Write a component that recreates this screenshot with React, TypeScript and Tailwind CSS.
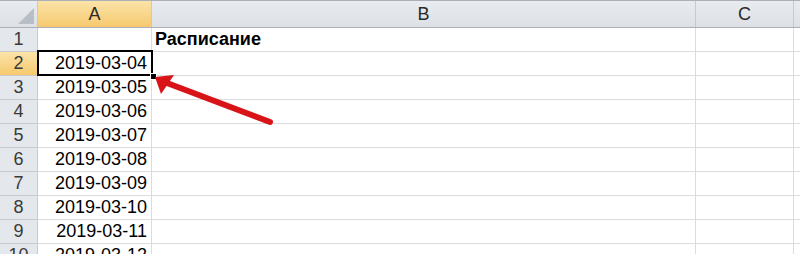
import React from 'react'

const dates = [
  '',
  '2019-03-04',
  '2019-03-05',
  '2019-03-06',
  '2019-03-07',
  '2019-03-08',
  '2019-03-09',
  '2019-03-10',
  '2019-03-11',
  '2019-03-12',
]

const font = { fontFamily: '"Liberation Sans", Arial, sans-serif' }

function ColumnHeader({ label, width, active }: { label: string; width: string; active?: boolean }) {
  return (
    <div
      className={`${width} h-full flex items-center justify-center border-r border-[#c5cad1] text-[18px] text-[#2a2a2a] ${
        active ? 'bg-gradient-to-b from-[#fbe3a8] to-[#f6c96e]' : 'bg-gradient-to-b from-[#e8ebef] to-[#dde1e6]'
      }`}
    >
      {label}
    </div>
  )
}

function Row({ n, date, bLabel }: { n: number; date: string; bLabel?: string }) {
  const active = n === 2
  return (
    <div className="flex h-[24px] shrink-0">
      <div
        className={`w-[38px] shrink-0 flex items-center justify-center border-r border-b border-[#c5cad1] text-[18px] text-[#3a3a3a] ${
          active ? 'bg-gradient-to-b from-[#fbe3a8] to-[#f6c96e]' : 'bg-[#e4e7eb]'
        }`}
      >
        {n}
      </div>
      <div className="w-[114px] shrink-0 flex items-center justify-end pr-[4px] border-r border-b border-[#dadcdd] text-[18px] text-black">
        {date}
      </div>
      <div className="w-[544px] shrink-0 flex items-center pl-[3px] border-r border-b border-[#dadcdd] text-[18px] font-bold text-black">
        {bLabel}
      </div>
      <div className="w-[98px] shrink-0 border-r border-b border-[#dadcdd]" />
      <div className="flex-1 border-b border-[#dadcdd]" />
    </div>
  )
}

export default function App() {
  return (
    <div className="relative w-[800px] h-[254px] overflow-hidden bg-white" style={font}>
      <div className="flex flex-col">
        <div className="flex h-[28px] shrink-0 border-t border-b border-[#a9b0b9]">
          <div className="w-[38px] shrink-0 h-full relative border-r border-[#c5cad1] bg-gradient-to-b from-[#e8ebef] to-[#dde1e6]">
            <svg className="absolute right-[3px] bottom-[3px]" width="16" height="16" viewBox="0 0 16 16">
              <polygon points="16,0 16,16 0,16" fill="#b8bec6" />
            </svg>
          </div>
          <ColumnHeader label="A" width="w-[114px] shrink-0" active />
          <ColumnHeader label="B" width="w-[544px] shrink-0" />
          <ColumnHeader label="C" width="w-[98px] shrink-0" />
          <div className="flex-1 h-full bg-gradient-to-b from-[#e8ebef] to-[#dde1e6]" />
        </div>
        {dates.map((d, i) => (
          <Row key={i} n={i + 1} date={d} bLabel={i === 0 ? 'Расписание' : undefined} />
        ))}
      </div>

      {/* selected cell A2 */}
      <div className="absolute left-[37px] top-[50px] w-[116px] h-[26px] border-2 border-black pointer-events-none" />
      <div className="absolute left-[150px] top-[73px] w-[5px] h-[5px] bg-black border border-white box-content" />

      {/* arrow */}
      <svg className="absolute left-0 top-0" width="800" height="254" viewBox="0 0 800 254">
        <line x1="270" y1="122" x2="167" y2="83" stroke="#d91419" strokeWidth="6" strokeLinecap="round" />
        <polygon points="155,77 174,75 161,94" fill="#d91419" />
      </svg>
    </div>
  )
}
